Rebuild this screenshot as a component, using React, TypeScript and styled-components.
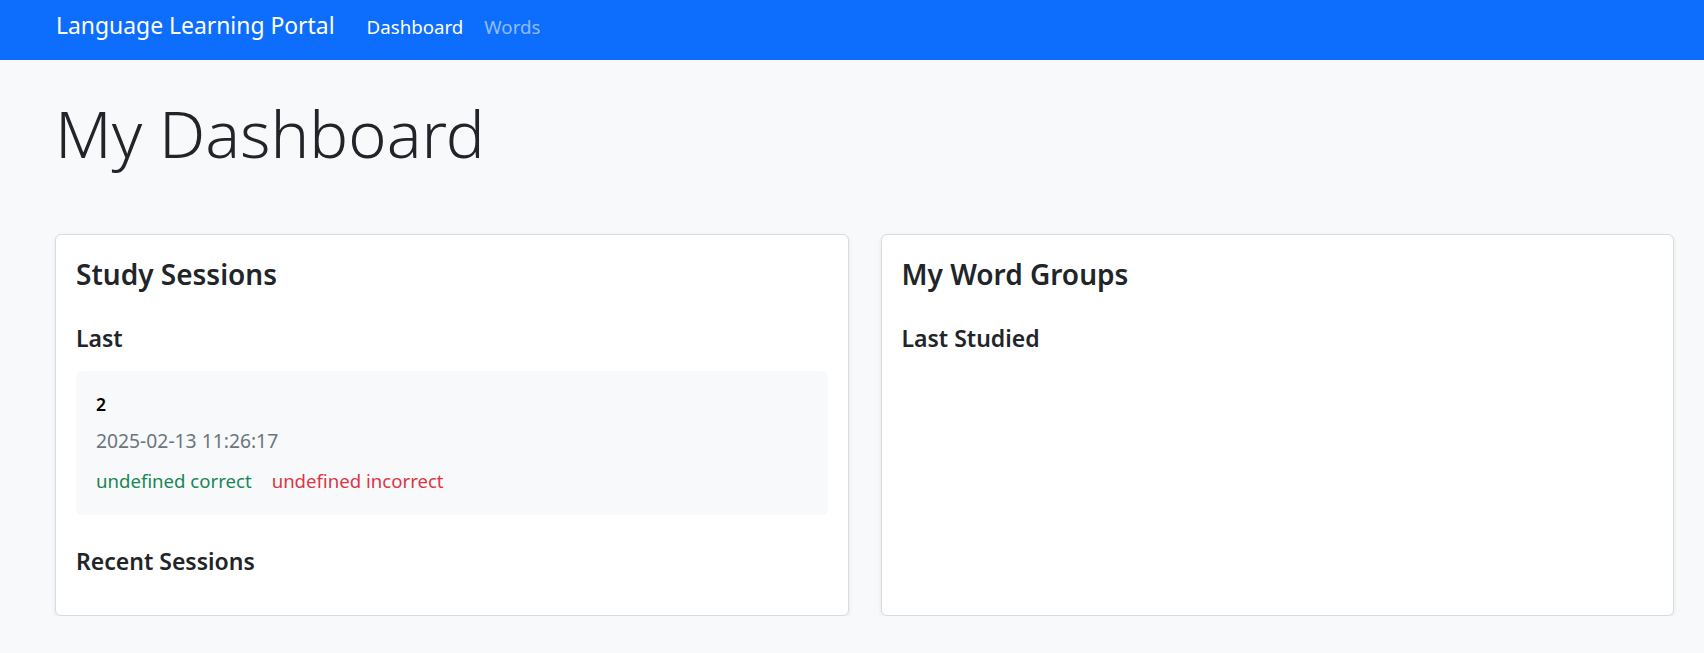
import React from "react";
import styled, { createGlobalStyle } from "styled-components";

const Global = createGlobalStyle`
  * { box-sizing: border-box; }
  html, body { margin: 0; padding: 0; background: #f8f9fa; }
  body {
    font-family: "Noto Sans", "Open Sans", sans-serif;
    color: #212529;
    -webkit-font-smoothing: antialiased;
  }
  h1, h2, h3, h4, h5, p { margin: 0; }
`;

const Navbar = styled.nav`
  height: 60px;
  background: #0d6efd;
  display: flex;
  align-items: baseline;
  padding: 10px 0 0 56px;
`;

const Brand = styled.a`
  font-size: 22.9px;
  line-height: 32px;
  color: #fff;
  text-decoration: none;
  margin-right: 32px;
`;

const NavLinks = styled.div`
  display: flex;
  align-items: baseline;
  gap: 21px;
`;

const NavLink = styled.a<{ $active?: boolean }>`
  font-size: 18.7px;
  line-height: 27px;
  text-decoration: none;
  color: ${(p) => (p.$active ? "#ffffff" : "rgba(255,255,255,0.55)")};
`;

const Main = styled.main`
  padding: 0 30px 0 55px;
`;

const Title = styled.h1`
  font-size: 65px;
  font-weight: 300;
  line-height: 66px;
  margin-top: 40px;
  color: #212529;
`;

const Grid = styled.div`
  display: grid;
  grid-template-columns: 1fr 1fr;
  gap: 32px;
  margin-top: 68px;
`;

const Card = styled.section`
  background: #fff;
  border: 1px solid #d8dbdf;
  border-radius: 6px;
  box-shadow: 0 2px 4px rgba(0, 0, 0, 0.08);
  padding: 23px 20px 19px;
  min-height: 382px;
`;

const CardTitle = styled.h3`
  font-size: 28px;
  font-weight: 600;
  line-height: 33.6px;
  margin-bottom: 33px;
`;

const SubTitle = styled.h4<{ $spaced?: boolean }>`
  font-size: 23px;
  font-weight: 600;
  line-height: 27.6px;
  margin-bottom: 19px;
  margin-top: ${(p) => (p.$spaced ? "33px" : "0")};
`;

const SessionBox = styled.div`
  background: #f8f9fa;
  border-radius: 6px;
  padding: 21px 20px 20px;
`;

const SessionId = styled.div`
  font-size: 17.5px;
  font-weight: 600;
  line-height: 25.5px;
  color: #000;
`;

const SessionDate = styled.div`
  font-size: 19.3px;
  line-height: 28.5px;
  color: #6c757d;
  margin-top: 9px;
`;

const Stats = styled.div`
  display: flex;
  gap: 20px;
  margin-top: 11.5px;
  font-size: 18.6px;
  line-height: 28.5px;
`;

const Stat = styled.span<{ $tone: "ok" | "bad" }>`
  color: ${(p) => (p.$tone === "ok" ? "#198754" : "#dc3545")};
`;

export default function App() {
  return (
    <>
      <Global />
      <Navbar>
        <Brand href="#">Language Learning Portal</Brand>
        <NavLinks>
          <NavLink href="#" $active>
            Dashboard
          </NavLink>
          <NavLink href="#">Words</NavLink>
        </NavLinks>
      </Navbar>
      <Main>
        <Title>My Dashboard</Title>
        <Grid>
          <Card>
            <CardTitle>Study Sessions</CardTitle>
            <SubTitle>Last</SubTitle>
            <SessionBox>
              <SessionId>2</SessionId>
              <SessionDate>2025-02-13 11:26:17</SessionDate>
              <Stats>
                <Stat $tone="ok">undefined correct</Stat>
                <Stat $tone="bad">undefined incorrect</Stat>
              </Stats>
            </SessionBox>
            <SubTitle $spaced>Recent Sessions</SubTitle>
          </Card>
          <Card>
            <CardTitle>My Word Groups</CardTitle>
            <SubTitle>Last Studied</SubTitle>
          </Card>
        </Grid>
      </Main>
    </>
  );
}
